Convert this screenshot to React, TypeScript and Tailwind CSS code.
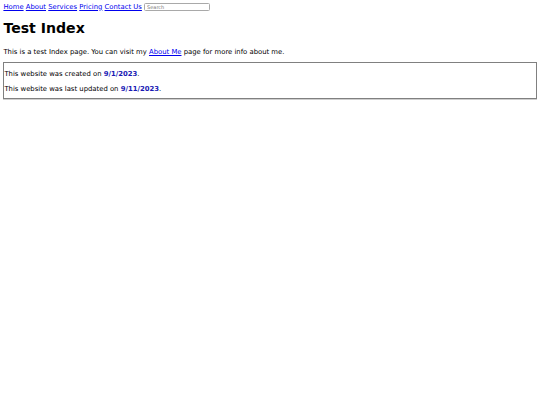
export default function App() {
  return (
    <div className="bg-white min-h-[405px] w-full">
      <div className="px-[3.4px] pt-[2.3px] font-['DejaVu_Sans',sans-serif] text-[6.85px] leading-[8px] text-black">
        <nav className="flex items-center h-[9px] whitespace-pre">
          <a href="#" className="text-[#0000ee] underline">Home</a>
          <span> </span>
          <a href="#" className="text-[#0000ee] underline">About</a>
          <span> </span>
          <a href="#" className="text-[#0000ee] underline">Services</a>
          <span> </span>
          <a href="#" className="text-[#0000ee] underline">Pricing</a>
          <span> </span>
          <a href="#" className="text-[#0000ee] underline">Contact Us</a>
          <span> </span>
          <input
            placeholder="Search"
            className="w-[66px] h-[8.5px] border border-[#a9a9a9] rounded-[1.5px] px-[2px] text-[5px] leading-[6px] placeholder:text-[#767676] outline-none"
          />
        </nav>
        <h1 className="text-[14.1px] leading-[17px] font-bold mt-[8.8px] mb-[10.5px]">Test Index</h1>
        <p className="mb-[6.4px]">
          This is a test Index page. You can visit my{" "}
          <a href="#" className="text-[#0000ee] underline">About Me</a> page for more info about me.
        </p>
        <div className="border border-[#808080] shadow-[0_1px_0_#cfcfcf] pt-[7.4px] pb-[5px] flex flex-col gap-[7px]">
          <p>
            This website was created on <b className="text-[#1a1ab4]">9/1/2023</b>.
          </p>
          <p>
            This website was last updated on <b className="text-[#1a1ab4]">9/11/2023</b>.
          </p>
        </div>
      </div>
    </div>
  );
}
